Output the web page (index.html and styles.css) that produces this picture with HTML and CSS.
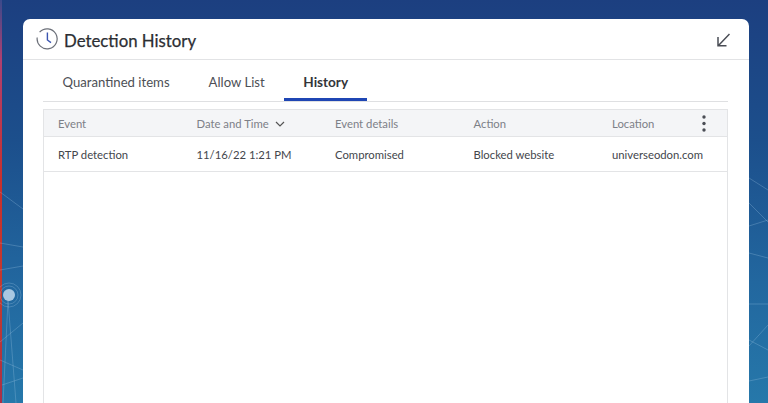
FILE: index.html
```html
<!DOCTYPE html>
<html lang="en">
<head>
    <meta charset="UTF-8">
    <title>Detection History</title>
    <link rel="stylesheet" href="styles.css">
</head>
<body>
    <div class="edge-strip"></div>
    <svg class="wallpaper" width="768" height="403" viewBox="0 0 768 403" fill="none" stroke="#9cc4e0" stroke-opacity="0.3">
        <path d="M0 192L23 209M0 243L23 247M0 270L23 266M0 342L23 323M8 300L3 403M8 300L16 403M0 360L23 370M2 385L23 378"/>
        <path d="M749 178L768 190M749 203L768 222M749 226L768 220M749 253L768 258M749 304L768 304M749 346L768 325M749 340L768 350M749 381L768 377"/>
        <circle cx="9" cy="295" r="6" fill="#a9c8e2" stroke="none" fill-opacity="1"/>
        <circle cx="9" cy="295" r="9"/>
        <circle cx="9" cy="295" r="12"/>
    </svg>

    <div class="window">
        <div class="title-bar">
            <svg class="clock-icon" width="22" height="22" viewBox="0 0 22 22" fill="none">
                <path d="M3.6 4.2A10 10 0 1 1 1.2 9.5" stroke="#6b6f78" stroke-width="1.2"/>
                <path d="M11.4 4.5V12L15 14.6" stroke="#3b55b0" stroke-width="1.4"/>
            </svg>
            <h1>Detection History</h1>
            <svg class="collapse-icon" width="13" height="14" viewBox="0 0 13 14" fill="none" stroke="#4a4d55" stroke-width="1.5">
                <path d="M12.5 1L1.5 12.5M1 4V12.7H9.5"/>
            </svg>
        </div>

        <div class="content">
            <div class="tabs">
                <div class="tab">Quarantined items</div>
                <div class="tab">Allow List</div>
                <div class="tab active">History</div>
            </div>

            <div class="table">
                <div class="table-row table-head">
                    <div>Event</div>
                    <div>Date and Time
                        <svg class="sort-icon" width="10" height="6" viewBox="0 0 10 6" fill="none" stroke="#555" stroke-width="1.2"><path d="M1 1L5 5L9 1"/></svg>
                    </div>
                    <div>Event details</div>
                    <div>Action</div>
                    <div>Location</div>
                    <svg class="more-icon" width="4" height="17" viewBox="0 0 4 17" fill="#4a4d55">
                        <circle cx="2" cy="2" r="1.7"/><circle cx="2" cy="8.5" r="1.7"/><circle cx="2" cy="15" r="1.7"/>
                    </svg>
                </div>
                <div class="table-row">
                    <div>RTP detection</div>
                    <div>11/16/22 1:21 PM</div>
                    <div>Compromised</div>
                    <div>Blocked website</div>
                    <div>universeodon.com</div>
                </div>
            </div>
        </div>
    </div>
</body>
</html>
```

FILE: styles.css
```css
body {
    margin: 0;
    height: 403px;
    overflow: hidden;
    position: relative;
    font-family: Lato, "Open Sans", Arial, sans-serif;
    background: linear-gradient(180deg, #1c3f80 0%, #1c4f8c 35%, #22679f 70%, #2678aa 100%);
    padding: 19px 19px 0 23px;
    box-sizing: border-box;
}
.edge-strip {
    position: absolute;
    left: 0;
    top: 0;
    width: 2px;
    height: 403px;
    background: linear-gradient(180deg, #3a4a8c 0%, #b04070 15%, #c8302c 45%, #c23a30 75%, #a83048 100%);
}
.wallpaper {
    position: absolute;
    left: 0;
    top: 0;
}
.window {
    position: relative;
    display: flex;
    flex-direction: column;
    height: 384px;
    background-color: #fff;
    border-radius: 7px 7px 0 0;
}
.title-bar {
    display: flex;
    align-items: center;
    height: 40px;
    padding: 0 19px 0 13px;
    border-bottom: 1px solid #e2e3e5;
}
.clock-icon {
    margin-right: 6px;
}
.title-bar h1 {
    flex: 1;
    margin: 2px 0 0;
    font-size: 16.8px;
    font-weight: 400;
    color: #2c2e33;
    -webkit-text-stroke: 0.25px #2c2e33;
}
.collapse-icon {
    margin-top: 1px;
}
.content {
    display: flex;
    flex: 1;
    flex-direction: column;
    padding: 0 21px 0 20px;
}
.tabs {
    display: flex;
    height: 42px;
    border-bottom: 1px solid #dfe0e2;
    box-sizing: border-box;
}
.tab {
    padding: 14px 19.5px 0;
    font-size: 13.15px;
    color: #4d5056;
    white-space: nowrap;
}
.tab.active {
    height: 24px;
    padding-left: 19px;
    padding-right: 19px;
    font-size: 13.6px;
    font-weight: 700;
    color: #33353a;
    border-bottom: 3px solid #1f46b4;
}
.table {
    flex: 1;
    margin-top: 7px;
    border: 1px solid #e3e4e6;
    border-bottom: none;
    font-size: 11.3px;
}
.table-row {
    display: grid;
    grid-template-columns: 138.5px 138.5px 138.5px 138.5px 1fr;
    align-items: center;
    height: 34px;
    padding-left: 14px;
    color: #43464c;
    border-bottom: 1px solid #e3e4e6;
}
.table-head {
    position: relative;
    height: 26px;
    background-color: #f4f5f7;
    color: #7d8087;
}
.sort-icon {
    margin-left: 3px;
    vertical-align: 1px;
}
.more-icon {
    position: absolute;
    right: 21px;
    top: 5px;
}
```
